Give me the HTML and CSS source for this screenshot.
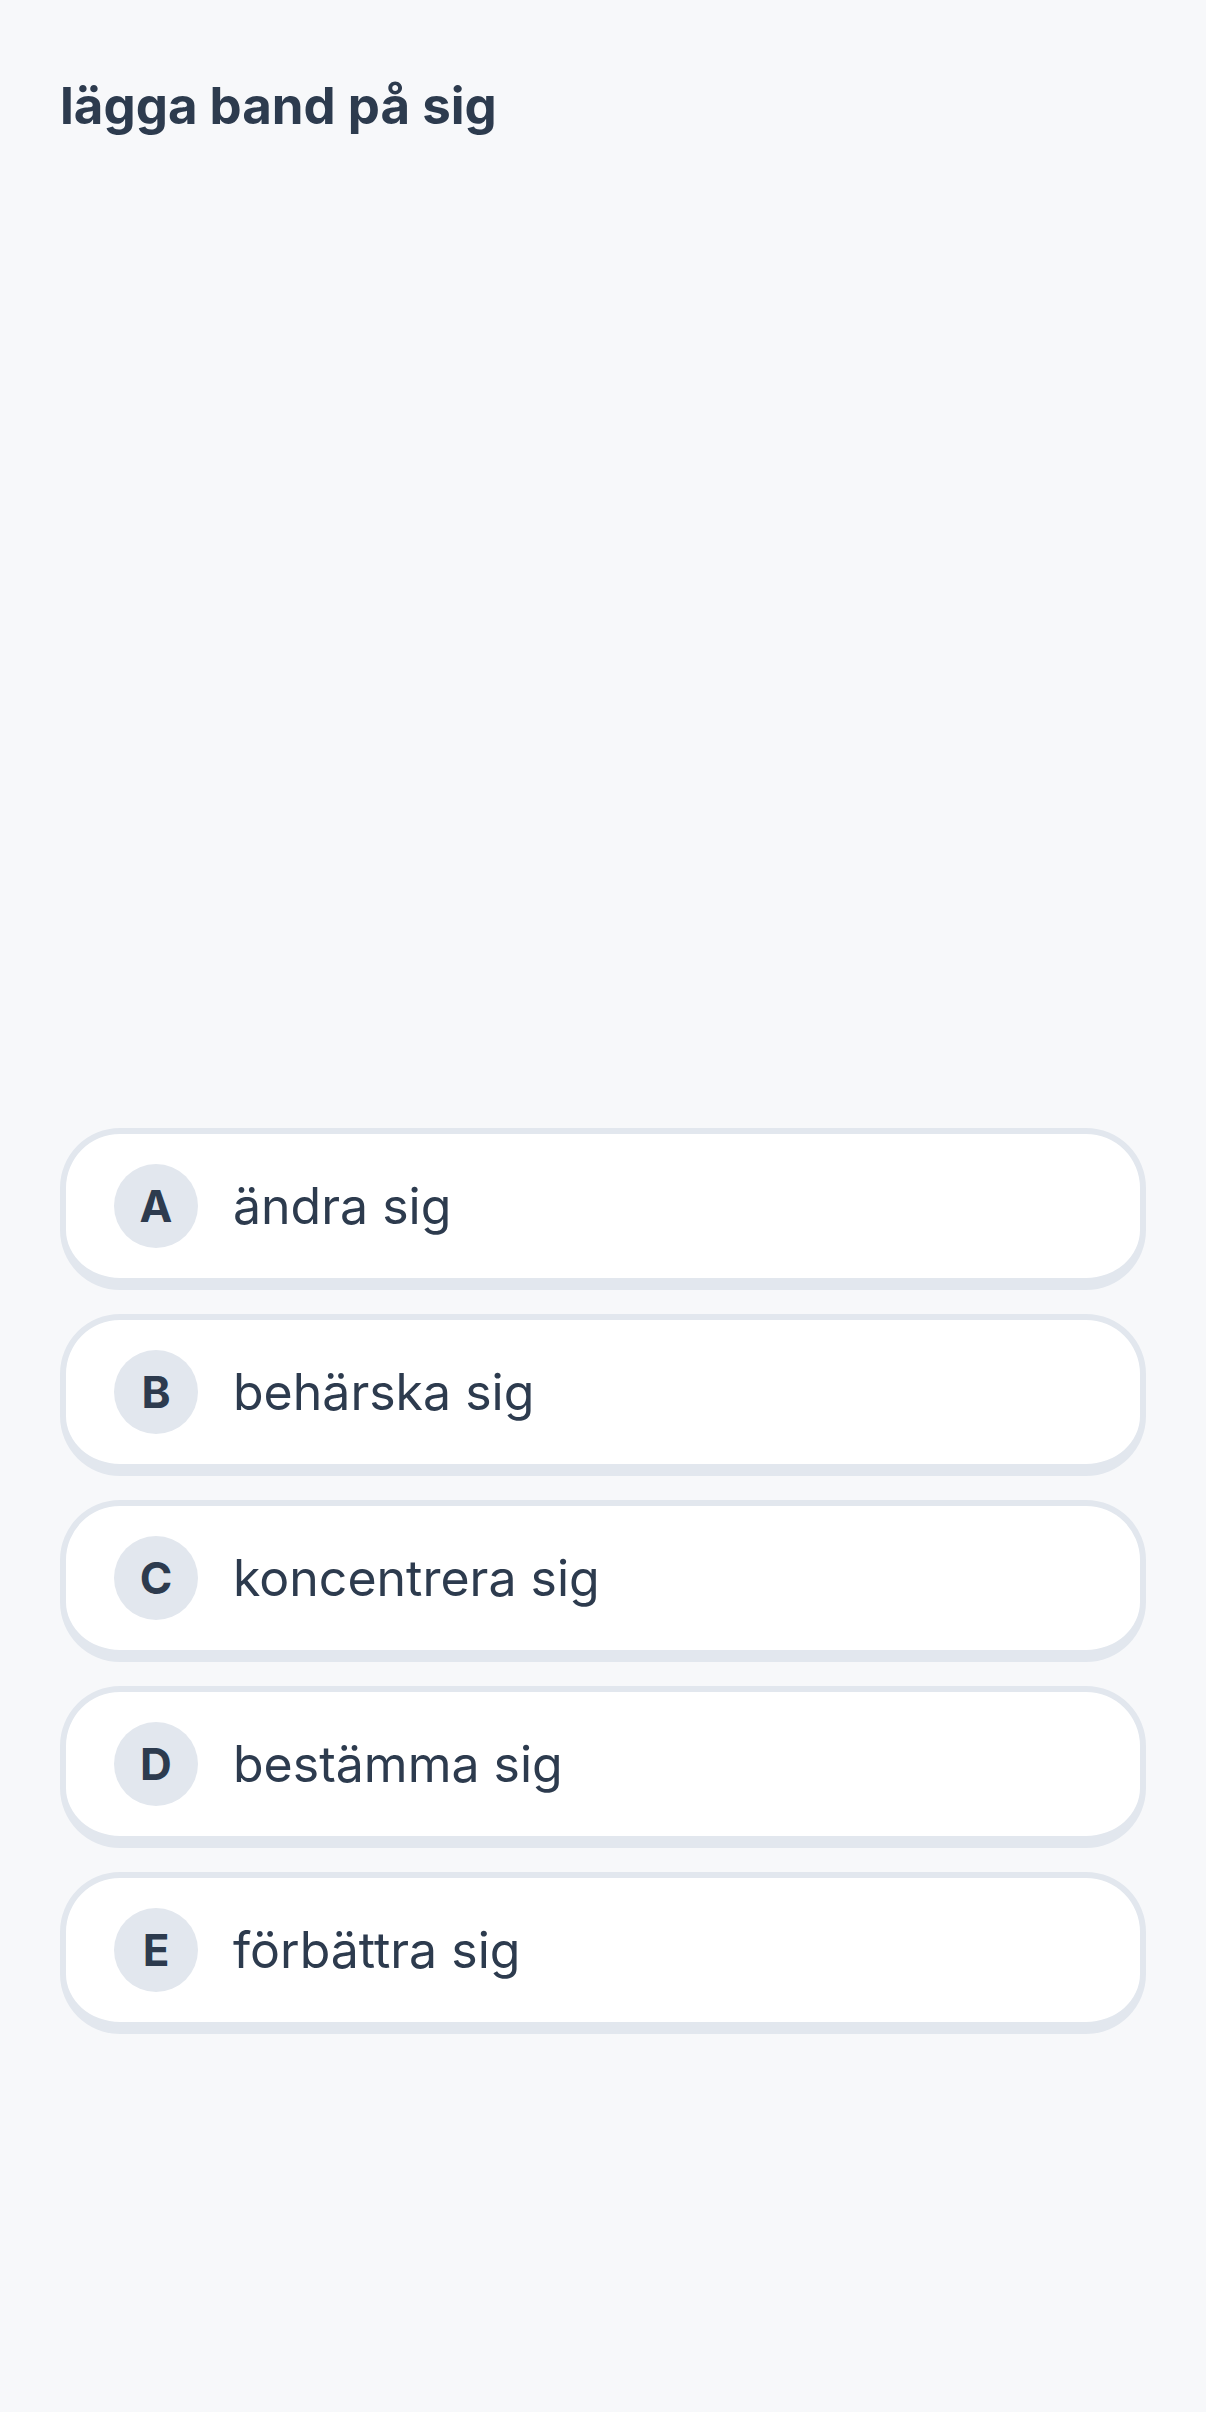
FILE: index.html
```html
<!DOCTYPE html>
<html lang="sv">
<head>
	<meta charset="UTF-8">
	<title>lägga band på sig</title>
	<link rel="stylesheet" href="styles.css">
</head>
<body>
	<div class="page">
		<h1 class="question">lägga band på sig</h1>
		<div class="options">
			<div class="option"><span class="letter">A</span><span class="answer">ändra sig</span></div>
			<div class="option"><span class="letter">B</span><span class="answer">behärska sig</span></div>
			<div class="option"><span class="letter">C</span><span class="answer">koncentrera sig</span></div>
			<div class="option"><span class="letter">D</span><span class="answer">bestämma sig</span></div>
			<div class="option"><span class="letter">E</span><span class="answer">förbättra sig</span></div>
		</div>
	</div>
</body>
</html>
```

FILE: styles.css
```css
*{
	margin: 0;
	padding: 0;
	box-sizing: border-box;
}
body{
	background: #f7f8fa;
	font-family: Inter, "Noto Sans", sans-serif;
	color: #2d3b4e;
}
.page{
	padding: 0 60px;
	min-height: 2412px;
}
.question{
	font-size: 51px;
	font-weight: 700;
	line-height: 56px;
	padding-top: 78px;
}
.options{
	margin-top: 994px;
	display: flex;
	flex-direction: column;
	gap: 24px;
}
.option{
	height: 162px;
	background: #fff;
	border: 6px solid #e2e7ee;
	border-bottom-width: 12px;
	border-radius: 60px;
	display: flex;
	align-items: center;
	padding-left: 48px;
}
.letter{
	width: 84px;
	height: 84px;
	border-radius: 50%;
	background: #e2e7ee;
	display: flex;
	align-items: center;
	justify-content: center;
	font-size: 44px;
	font-weight: 700;
	flex-shrink: 0;
}
.answer{
	font-size: 50px;
	margin-left: 35px;
}
```
